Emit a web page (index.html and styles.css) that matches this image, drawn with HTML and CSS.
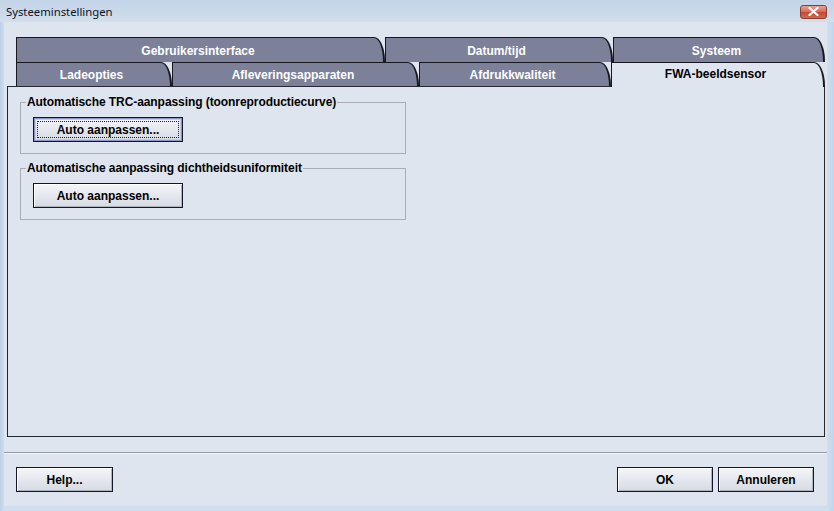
FILE: index.html
```html
<!DOCTYPE html>
<html lang="nl">
<head>
<meta charset="utf-8">
<title>Systeeminstellingen</title>
<link rel="stylesheet" href="styles.css">
</head>
<body>
<div class="window">
  <div class="titlebar">
    <span class="title">Systeeminstellingen</span>
    <button class="close" aria-label="Sluiten">
      <svg width="13" height="9" viewBox="0 0 13 9"><path d="M2.5 1 L10.5 8 M10.5 1 L2.5 8" stroke="#fff" stroke-width="2.2" stroke-linecap="round"/></svg>
    </button>
  </div>
  <div class="client">
    <div class="tabs">
      <div class="tabrow">
        <div class="tab w369">Gebruikersinterface</div>
        <div class="tab w228">Datum/tijd</div>
        <div class="tab w212">Systeem</div>
      </div>
      <div class="tabrow second">
        <div class="tab w156">Ladeopties</div>
        <div class="tab w247">Afleveringsapparaten</div>
        <div class="tab w192">Afdrukkwaliteit</div>
        <div class="tab w214 selected">FWA-beeldsensor</div>
      </div>
    </div>
    <div class="panel">
      <fieldset class="group">
        <legend>Automatische TRC-aanpassing (toonreproductiecurve)</legend>
        <button class="btn wide focused"><span class="focusrect">Auto aanpassen...</span></button>
      </fieldset>
      <fieldset class="group">
        <legend>Automatische aanpassing dichtheidsuniformiteit</legend>
        <button class="btn wide"><span class="focusrect plain">Auto aanpassen...</span></button>
      </fieldset>
    </div>
    <div class="separator"></div>
    <div class="footer">
      <button class="btn help">Help...</button>
      <div class="footer-right">
        <button class="btn">OK</button>
        <button class="btn">Annuleren</button>
      </div>
    </div>
  </div>
</div>
</body>
</html>
```

FILE: styles.css
```css
html, body {
  margin: 0;
  padding: 0;
  background: #c6d8ea;
}

.window {
  width: 834px;
  height: 511px;
  display: flex;
  flex-direction: column;
  background: linear-gradient(to right, #bcd0e6 0px, #cfdeee 4px, #cfdeee 827px, #c2d5ea 834px);
  box-sizing: border-box;
  font-family: "Liberation Sans", Arial, sans-serif;
}

.titlebar {
  height: 22px;
  flex: none;
  display: flex;
  align-items: center;
  justify-content: space-between;
  background: linear-gradient(to bottom, #c3d4e8 0%, #cbd9ea 60%, #d3dfed 100%);
  padding: 0 7px 0 6px;
}

.title {
  font-family: "Noto Sans", "DejaVu Sans", sans-serif;
  font-size: 11.3px;
  color: #10141c;
}

.close {
  width: 27px;
  height: 14px;
  margin-top: 1px;
  padding: 0;
  border: 1px solid #8c3b2e;
  border-radius: 3px;
  background: linear-gradient(to bottom, #e9a292 0%, #d8705c 45%, #c24a34 55%, #d26a50 100%);
  display: flex;
  align-items: center;
  justify-content: center;
}

.client {
  flex: 1;
  margin: 0 7px 5px 4px;
  background: #dfe5ee;
  display: flex;
  flex-direction: column;
}

.tabs {
  padding: 15px 0 0 12px;
  display: flex;
  flex-direction: column;
}

.tabrow {
  display: flex;
}

.tab {
  box-sizing: border-box;
  height: 25px;
  background: #7c8099;
  color: #ffffff;
  font-weight: bold;
  font-size: 12px;
  display: flex;
  align-items: center;
  justify-content: center;
  border-top: 1px solid #17171f;
  border-left: 1px solid #17171f;
  border-right: 2px solid #17171f;
  border-top-right-radius: 11px 24px;
  padding: 2px 4px 0 0;
}

.second .tab {
  height: 24px;
  padding-top: 1px;
}

.second .tab.selected {
  height: 25px;
  margin-bottom: -1px;
  background: #dfe5ee;
  color: #000000;
  position: relative;
  z-index: 1;
  align-items: flex-start;
  padding-top: 4px;
}

.w369 { width: 369px; }
.w228 { width: 228px; }
.w212 { width: 212px; }
.w156 { width: 156px; }
.w247 { width: 247px; }
.w192 { width: 192px; }
.w214 { width: 214px; }

.panel {
  box-sizing: border-box;
  height: 351px;
  margin: 0 2px 0 3px;
  border: 1px solid #26262e;
  padding: 8px 0 0 12px;
  display: flex;
  flex-direction: column;
  gap: 7px;
}

.group {
  width: 386px;
  box-sizing: border-box;
  margin: 0;
  border: 1px solid #a9adb6;
  padding: 8px 0 11px 12px;
}

.group legend {
  font-size: 12px;
  font-weight: bold;
  color: #000;
  line-height: 14px;
  padding: 0 1px;
  margin-left: -7px;
  letter-spacing: -0.07px;
}

.btn {
  box-sizing: border-box;
  width: 96px;
  height: 25px;
  padding: 0;
  border: 1px solid #16162a;
  background: linear-gradient(to bottom, #f4f6f9 0%, #e6e9ef 45%, #d6dae2 100%);
  box-shadow: inset 1px 1px 0 #ffffff, inset -1px -1px 0 #aeb3c0;
  font-family: "Liberation Sans", Arial, sans-serif;
  font-size: 12px;
  font-weight: bold;
  color: #000;
  display: flex;
  align-items: center;
  justify-content: center;
}

.btn.wide {
  width: 150px;
  display: flex;
  padding: 3px;
}

.btn.focused {
  box-shadow: inset 0 0 0 1px #8e96c6, inset 0 0 0 2px #c4c9e4;
}

.focusrect {
  flex: 1;
  align-self: stretch;
  display: flex;
  align-items: center;
  justify-content: center;
  border: 1px dotted #202020;
}

.focusrect.plain {
  border-color: transparent;
}

.separator {
  margin-top: 15px;
  border-top: 1px solid #959aa4;
  border-bottom: 1px solid #f2f5f9;
}

.footer {
  display: flex;
  justify-content: space-between;
  padding: 13px 13px 0 12px;
}

.btn.help {
  width: 97px;
}

.footer-right {
  display: flex;
  gap: 5px;
}
```
